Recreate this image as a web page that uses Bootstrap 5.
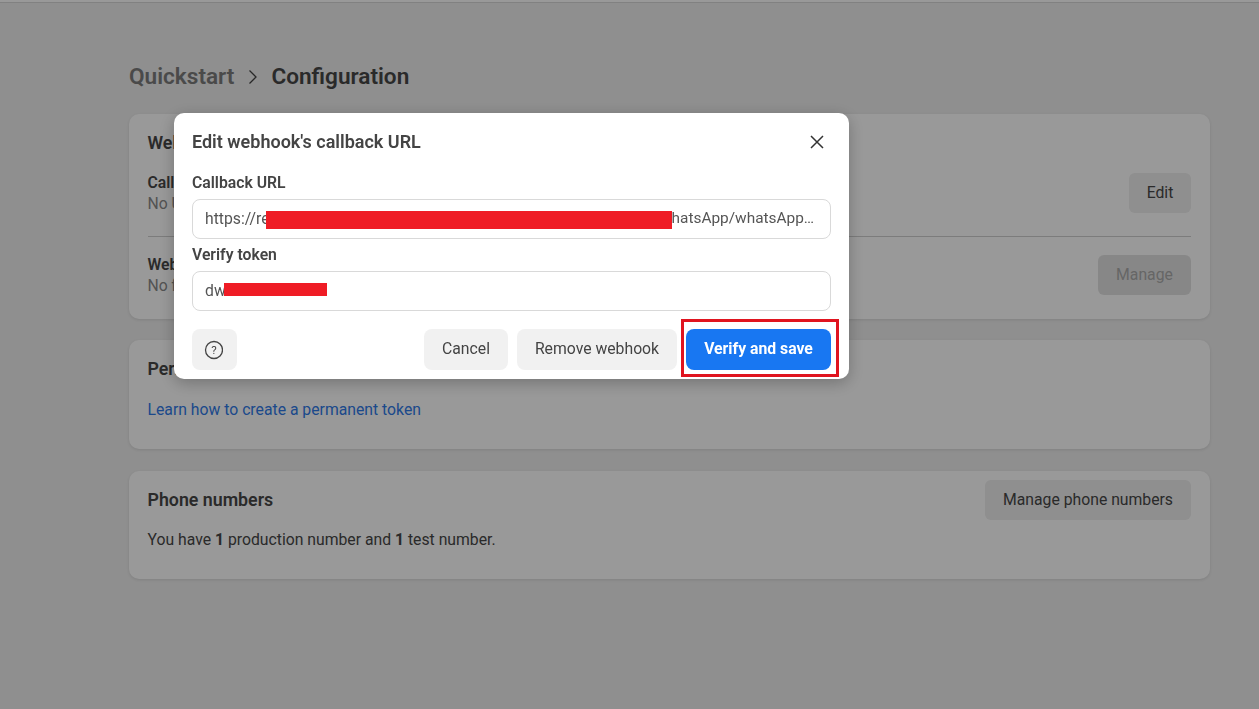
<!DOCTYPE html>
<html lang="en">
<head>
<meta charset="utf-8">
<title>Configuration</title>
<link href="https://cdn.jsdelivr.net/npm/bootstrap@5.3.0/dist/css/bootstrap.min.css" rel="stylesheet">
<style>
html,body{height:100%;overflow:hidden}
body{font-family:Roboto,"Liberation Sans",sans-serif;background:#eee;color:#474747;font-size:15.75px;line-height:21px}
.topstrip{background:#fff;border-bottom:1px solid #d8d8d8;box-sizing:content-box;height:2px}
.pagewrap{padding:59px 49px 0 129px}
.crumbs{height:30px;margin-bottom:22px;font-size:22.6px;line-height:30px;font-weight:600;gap:13.5px}
.crumbs .muted{color:#7c7c7c}
.panel{background:#fff;border-radius:10px;box-shadow:0 1px 3px rgba(0,0,0,.1);padding:18px 19px 18px 18.5px;margin-bottom:21px}
.panel h2{font-size:17.8px;line-height:22px;font-weight:600;margin:0}
.lbl{font-weight:600}
.sub{color:#8a8a8a}
.gbtn{background:#eee;color:#474747;border:0;border-radius:6px;height:40px;font-size:15.75px;line-height:20px;padding:0;font-weight:400}
.gbtn.off{background:#e2e2e2;color:#aaa}
.rowline{border-top:1px solid #cfcfcf;margin:0;opacity:1}
.lnk{color:#2f7ae8;text-decoration:none}
.overlay{position:fixed;inset:0;background:rgba(0,0,0,.4)}
.dlg{position:fixed;left:174px;top:113px;width:675px;height:266px;background:#fff;border-radius:10px;box-shadow:0 4px 16px rgba(0,0,0,.25);padding:18px;color:#444}
.dlg h1{font-size:18px;line-height:22px;font-weight:600;margin:0;color:#444}
.xbtn{background:none;border:0;padding:0;width:18px;height:18px;line-height:0}
.flabel{font-size:15.75px;line-height:20px;font-weight:600;color:#444}
.field{height:40px;border:1px solid #d9d9d9;border-radius:8px;padding:0 12px 2px;color:#555;font-size:15.75px;white-space:nowrap;overflow:hidden}
.redact{background:#ef1c25;display:block;flex:none}
.r1{width:406px;height:18px;margin-left:-4px;margin-top:4px}
.r2{width:103px;height:13px;margin-bottom:1px;margin-left:-2px}
.tailtext{font-size:15.4px}
.dbtn{background:#f1f1f1;color:#444;border:0;border-radius:8px;height:41px;font-size:15.75px;line-height:20px;padding:0 0 2px;font-weight:400}
.bluebtn{background:#1877f2;color:#fff;font-weight:700;width:145px}
.mark-box{position:absolute;left:-5px;top:-10px;width:158px;height:58px;border:3px solid #e0141f;pointer-events:none}
</style>
</head>
<body>
<div class="topstrip"></div>
<div class="pagewrap">
  <div class="crumbs d-flex align-items-center">
    <span class="muted">Quickstart</span>
    <svg width="10" height="16" viewBox="0 0 10 16" fill="none" stroke="#444" stroke-width="1.3"><path d="M1.500 1.500 8 8l-6.500 6.500"/></svg>
    <span>Configuration</span>
  </div>
  <section class="panel" style="height:205px">
    <h2>Webhook</h2>
    <div class="d-flex justify-content-between align-items-center" style="margin-top:9px;height:60px">
      <div><div class="lbl">Callback URL</div><div class="sub">No URL</div></div>
      <button class="gbtn" style="width:62px">Edit</button>
    </div>
    <hr class="rowline" style="margin-top:13px">
    <div class="d-flex justify-content-between align-items-center" style="margin-top:12px;height:52px">
      <div><div class="lbl">Webhook fields</div><div class="sub">No fields</div></div>
      <button class="gbtn off" style="width:93px">Manage</button>
    </div>
  </section>
  <section class="panel" style="height:109px;margin-bottom:22px">
    <h2>Permanent token</h2>
    <div style="margin-top:19px"><a class="lnk" href="#">Learn how to create a permanent token</a></div>
  </section>
  <section class="panel" style="height:108px;padding-top:9px">
    <div class="d-flex justify-content-between align-items-center">
      <h2>Phone numbers</h2>
      <button class="gbtn" style="width:206px">Manage phone numbers</button>
    </div>
    <div style="margin-top:9px">You have <b>1</b> production number and <b>1</b> test number.</div>
  </section>
</div>
<div class="overlay"></div>
<div class="dlg" role="dialog">
  <div class="d-flex justify-content-between align-items-center" style="margin-bottom:20px">
    <h1>Edit webhook's callback URL</h1>
    <button class="xbtn" aria-label="Close" style="margin-right:5px"><svg width="18" height="18" viewBox="0 0 18 18" stroke="#333" stroke-width="1.500" fill="none"><path d="M3 3l12 12M15 3 3 15"/></svg></button>
  </div>
  <div class="flabel" style="margin-bottom:6px">Callback URL</div>
  <div class="field d-flex align-items-center"><span>https://re</span><span class="redact r1"></span><span class="tailtext">hatsApp/whatsApp…</span></div>
  <div class="flabel" style="margin-top:6px;margin-bottom:6px">Verify token</div>
  <div class="field d-flex align-items-center"><span>dw</span><span class="redact r2"></span></div>
  <div class="d-flex align-items-center" style="margin-top:18px">
    <button class="dbtn d-flex align-items-center justify-content-center" style="width:45px;padding:0" aria-label="Help"><svg class="me-1" width="20" height="20" viewBox="0 0 20 20" fill="none" stroke="#444" stroke-width="1.300"><circle cx="11" cy="10" r="8.500"/><text x="11" y="14" text-anchor="middle" font-family="Roboto" font-size="11.500" fill="#444" stroke="none">?</text></svg></button>
    <button class="dbtn ms-auto" style="width:84px">Cancel</button>
    <button class="dbtn" style="width:160px;margin-left:9px">Remove webhook</button>
    <div class="position-relative" style="margin-left:9px">
      <button class="dbtn bluebtn d-block">Verify and save</button>
      <span class="mark-box"></span>
    </div>
  </div>
</div>
<script src="https://cdn.jsdelivr.net/npm/bootstrap@5.3.0/dist/js/bootstrap.bundle.min.js"></script>
</body>
</html>
